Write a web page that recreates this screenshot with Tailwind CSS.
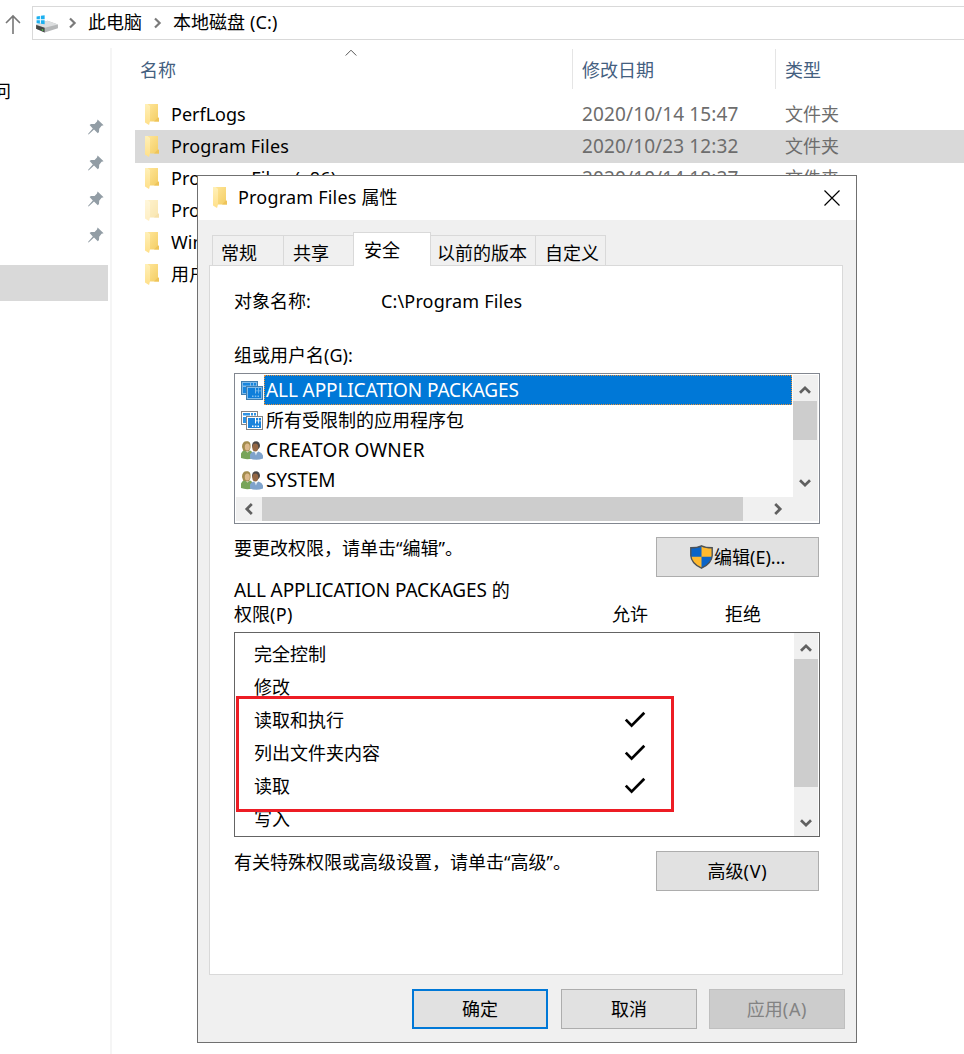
<!DOCTYPE html>
<html lang="zh-CN">
<head>
<meta charset="utf-8">
<title>本地磁盘 (C:)</title>
<script src="https://cdn.jsdelivr.net/npm/@tailwindcss/browser@4"></script>
</head>
<body class="bg-white">
<svg class="absolute w-0 h-0">
  <defs>
    <linearGradient id="gf" x1="0" x2="1" y1="0" y2="1"><stop offset="0" stop-color="#ffe69a"/><stop offset="1" stop-color="#f3cd63"/></linearGradient>
    <linearGradient id="gl" x1="0" x2="0" y1="0" y2="1"><stop offset="0" stop-color="#fff0b8"/><stop offset="1" stop-color="#ffe08a"/></linearGradient>
    <symbol id="folder" viewBox="0 0 15 21"><path d="M2 0H13V13.5L14 14V17.5H2Z" fill="url(#gf)"/><path d="M13 13.5L14 14V17.5H9Z" fill="#eec45a"/><path d="M0 0H2.5L5 2V17.5L4 21L0 18.5Z" fill="url(#gl)"/></symbol>
    <symbol id="pin" viewBox="0 0 16 16"><path d="M9.6 .6L15.6 6.2L13.6 6.8L11.2 9.8L11 13L9.8 14.2L6 10.6L.6 15.4L0 14.9L4.8 9.4L1.6 6L3 4.9L6.6 5L9 2.6Z" fill="#929da5"/></symbol>
    <symbol id="up" viewBox="0 0 12 9"><path d="M1 7.8L6 2.8L11 7.8" fill="none" stroke="#606060" stroke-width="2.7"/></symbol>
    <symbol id="down" viewBox="0 0 12 9"><path d="M1 1.2L6 6.2L11 1.2" fill="none" stroke="#606060" stroke-width="2.7"/></symbol>
    <symbol id="left" viewBox="0 0 9 12"><path d="M7.8 1L2.8 6L7.8 11" fill="none" stroke="#606060" stroke-width="2.7"/></symbol>
    <symbol id="right" viewBox="0 0 9 12"><path d="M1.2 1L6.2 6L1.2 11" fill="none" stroke="#606060" stroke-width="2.7"/></symbol>
    <symbol id="crumb" viewBox="0 0 8 12"><path d="M1 1.5L5.6 6L1 10.5" fill="none" stroke="#7a7a7a" stroke-width="2.2"/></symbol>
    <symbol id="check" viewBox="0 0 22 18"><path d="M1.8 8.6L7.6 14.6L20.3 1.8" fill="none" stroke="#000" stroke-width="2.7"/></symbol>
    <symbol id="pkg" viewBox="0 0 22 19">
      <rect x=".5" y=".5" width="16" height="13" fill="#fff" stroke="#858585"/><path d="M2 2H9V4.500H2ZM2 6H5V12H2ZM10 2H12V4.500H10ZM13 2H15V4.500H13Z" fill="#2f93e4"/>
      <rect x="5.5" y="5.500" width="16" height="13" fill="#fff" stroke="#858585"/><path d="M7 7H14V12.500H7ZM15 7H17.200V9.500H15ZM18 7H20V9.500H18ZM15 10.200H17.200V12.500H15ZM18 10.200H20V12.500H18ZM7 12.500H20V17H7Z" fill="#1c84dc"/><path d="M11 14.500h1.500v1.500H11zM13.800 14.500h1.500v1.500h-1.500zM16.500 14.500H18v1.500h-1.500z" fill="#fff"/>
    </symbol>
    <symbol id="users" viewBox="0 0 22 19">
      <path d="M1 6C1 2 3 0 6 .3C9 .3 10 3 9.500 7L8 10.500H2.500Z" fill="#a38c4e"/><ellipse cx="6.300" cy="6" rx="2.500" ry="3.500" fill="#dcb98c"/>
      <path d="M0 17V12.500Q1 9.700 4 9.500L6.500 11.500L9 9.500Q11.500 10 11.500 13V17.500Q5 19 0 17Z" fill="#78a45a"/>
      <ellipse cx="15" cy="4.500" rx="4" ry="4.300" fill="#4a4644"/><ellipse cx="14.300" cy="6.500" rx="3" ry="4" fill="#946743"/>
      <path d="M9 17.500V13.500Q10 11 13 10.500L15 12.500L17.500 10.500Q21 11.500 22 14.500V17.500Q15 20 9 17.500Z" fill="#7fa3cc"/><path d="M13.300 10.800L14.600 12.600L16.200 10.800L15 14.500Z" fill="#e6eef6"/>
    </symbol>
  </defs>
</svg>
<div class="relative w-[964px] h-[1054px] overflow-hidden bg-white text-black text-[18px] leading-6 whitespace-nowrap font-['Noto_Sans','Noto_Sans_CJK_SC',sans-serif]">

  <!-- address bar -->
  <header class="flex h-12 pt-[6px]">
    <div class="w-8 pl-[5px] pt-[8px]"><svg class="w-4 h-5" viewBox="0 0 16 20"><path d="M8 20V2M1 9L8 2L15 9" fill="none" stroke="#777" stroke-width="1.600"/></svg></div>
    <div class="flex h-[34px] flex-1 items-center border border-r-0 border-[#d9d9d9] pl-[3px]">
      <svg class="w-[23px] h-[19px] mt-[2px]" viewBox="0 0 24 20"><path d="M0 10L12 6L23 10V14L9 18.500L0 14.500Z" fill="#b5b7b8"/><path d="M0 10L12 6L23 10L9 13.500Z" fill="#dcdedf"/><path d="M0 10.500L9 13.500V18.500L0 14.500Z" fill="#444746"/><path d="M6 14.800l1.500.5v1.500L6 16.200z" fill="#57d04b"/><path d="M.5 1.500L4 1V4.500H.5ZM5 .8L9 .2V4.500H5ZM.5 5.500H4V9L.5 8.600ZM5 5.500H9V9.800L5 9.200Z" fill="#1cb0f0"/></svg>
      <svg class="w-2 h-3 ml-[10px]"><use href="#crumb"/></svg>
      <span class="ml-[11px] mb-[2px]">此电脑</span>
      <svg class="w-2 h-3 ml-[12px]"><use href="#crumb"/></svg>
      <span class="ml-[11px] mb-[2px]">本地磁盘<span class="tracking-[.2px]"> (C:)</span></span>
    </div>
  </header>

  <div class="flex">
    <!-- navigation pane -->
    <nav class="w-[112px] h-[1006px] border-r-2 border-[#f5f5f5] pt-[25px] overflow-hidden">
      <div class="h-9 -ml-[7px] flex items-center">问</div>
      <div class="h-9 flex items-center justify-end pr-[6px]"><svg class="w-4 h-4"><use href="#pin"/></svg></div>
      <div class="h-9 flex items-center justify-end pr-[6px]"><svg class="w-4 h-4"><use href="#pin"/></svg></div>
      <div class="h-9 flex items-center justify-end pr-[6px]"><svg class="w-4 h-4"><use href="#pin"/></svg></div>
      <div class="h-9 flex items-center justify-end pr-[6px]"><svg class="w-4 h-4"><use href="#pin"/></svg></div>
      <div class="mt-3 h-9 w-[108px] bg-[#d9d9d9]"></div>
    </nav>

    <!-- file list -->
    <main class="flex-1 pl-[23px]">
      <div class="flex h-[50px] pt-px text-[#44607f]">
        <div class="relative w-[438px] h-10 border-r border-[#e5e5e5] pl-[5px] pt-[9px]">名称
          <svg class="absolute left-[210px] top-0 w-3 h-[7px]" viewBox="0 0 12 7"><path d="M.7 6.500L6 1.200L11.300 6.500" fill="none" stroke="#555"/></svg>
        </div>
        <div class="w-[203px] h-10 border-r border-[#e5e5e5] pl-[9px] pt-[9px]">修改日期</div>
        <div class="pl-[9px] pt-[9px]">类型</div>
      </div>
      <div class="flex h-8 items-center"><svg class="w-[15px] h-[21px] ml-[10px]"><use href="#folder"/></svg><span class="w-[411px] ml-[11px]">PerfLogs</span><span class="w-[203px] text-[19px] tracking-[.12px] text-[#6d6d6d]">2020/10/14 15:47</span><span class="text-[#6d6d6d]">文件夹</span></div>
      <div class="flex h-[33px] -mb-px pb-px items-center bg-[#d9d9d9]"><svg class="w-[15px] h-[21px] ml-[10px]"><use href="#folder"/></svg><span class="w-[411px] ml-[11px] tracking-[.15px]">Program Files</span><span class="w-[203px] text-[19px] tracking-[.12px] text-[#6d6d6d]">2020/10/23 12:32</span><span class="text-[#6d6d6d]">文件夹</span></div>
      <div class="flex h-8 items-center"><svg class="w-[15px] h-[21px] ml-[10px]"><use href="#folder"/></svg><span class="w-[411px] ml-[11px] tracking-[.2px]">Program Files (x86)</span><span class="w-[203px] text-[19px] tracking-[.12px] text-[#6d6d6d]">2020/10/14 18:27</span><span class="text-[#6d6d6d]">文件夹</span></div>
      <div class="flex h-8 items-center"><svg class="w-[15px] h-[21px] ml-[10px] opacity-50"><use href="#folder"/></svg><span class="w-[411px] ml-[11px]">ProgramData</span></div>
      <div class="flex h-8 items-center"><svg class="w-[15px] h-[21px] ml-[10px]"><use href="#folder"/></svg><span class="w-[411px] ml-[11px]">Windows</span></div>
      <div class="flex h-8 items-center"><svg class="w-[15px] h-[21px] ml-[10px]"><use href="#folder"/></svg><span class="w-[411px] ml-[11px]">用户</span></div>
    </main>
  </div>

  <!-- properties window -->
  <section class="absolute left-[197px] top-[175px] w-[660px] h-[868px] border border-[#707070] bg-[#f0f0f0]">
    <div class="flex h-11 items-center bg-white pl-[15px] pr-[16px]">
      <svg class="w-[15px] h-[21px] -mt-px"><use href="#folder"/></svg>
      <span class="ml-[10px] mb-[2px]"><span class="tracking-[.2px]">Program Files </span>属性</span>
      <svg class="ml-auto w-4 h-4" viewBox="0 0 16 16"><path d="M.5 .5L15.500 15.500M15.500 .5L.5 15.500" stroke="#000" stroke-width="1.200"/></svg>
    </div>

    <div class="relative z-10 flex items-end h-[46px] pl-[14px]">
      <div class="w-[72px] h-[31px] border border-[#d9d9d9] pl-[8px] pt-[5px]">常规</div>
      <div class="w-[69px] h-[31px] border-y border-[#d9d9d9] pl-[9px] pt-[5px]">共享</div>
      <div class="w-[78px] h-[34px] border border-b-0 border-[#d9d9d9] bg-white pl-[10px] pt-[5px]">安全</div>
      <div class="w-[105px] h-[31px] border border-l-0 border-[#d9d9d9] pl-[6px] pt-[5px]">以前的版本</div>
      <div class="w-[70px] h-[31px] border border-l-0 border-[#d9d9d9] pl-[9px] pt-[5px]">自定义</div>
    </div>

    <div class="-mt-px ml-[11px] w-[634px] h-[710px] border border-[#d9d9d9] bg-white pl-6 pt-[23px]">
      <div class="flex"><span class="w-[147px]">对象名称:</span><span class="tracking-[.15px]">C:\Program Files</span></div>
      <div class="mt-[30px]">组或用户名(G):</div>

      <div class="mt-[6px] flex flex-wrap content-start w-[586px] h-[151px] border border-[#828790] bg-white p-px">
        <div class="w-[557px] h-[122px] pl-[5px]">
          <div class="flex h-[30px] items-center"><svg class="w-[22px] h-[19px]" viewBox="0 0 22 19"><use href="#pkg" width="22" height="19"/><path d="M0 0H17V5H22V19H5V14H0Z" fill="#0078d7" opacity=".5"/></svg><span class="ml-px h-[30px] w-[528px] border border-dotted border-[#e8923c] bg-[#0078d7] pl-px pt-[2px] text-[19px] tracking-[-.1px] text-white">ALL APPLICATION PACKAGES</span></div>
          <div class="flex h-[30px] items-center"><svg class="w-[22px] h-[19px]"><use href="#pkg"/></svg><span class="ml-[3px]">所有受限制的应用程序包</span></div>
          <div class="flex h-[30px] items-center"><svg class="w-[22px] h-[19px]"><use href="#users"/></svg><span class="ml-[3px] text-[19px] tracking-[.2px]">CREATOR OWNER</span></div>
          <div class="flex h-[30px] items-center"><svg class="w-[22px] h-[19px]"><use href="#users"/></svg><span class="ml-[3px] text-[19px] tracking-[-.1px]">SYSTEM</span></div>
        </div>
        <div class="flex flex-col items-start w-[25px] h-[122px] bg-[#f0f0f0]">
          <svg class="w-3 h-[9px] ml-[6px] mt-[10px] mb-[7px]"><use href="#up"/></svg>
          <div class="w-6 h-[39px] bg-[#cdcdcd]"></div>
          <svg class="w-3 h-[9px] ml-[6px] mt-auto mb-[9px]"><use href="#down"/></svg>
        </div>
        <div class="flex items-center w-[582px] h-6 bg-[#f0f0f0]">
          <svg class="w-[9px] h-3 ml-[8px] mr-[9px]"><use href="#left"/></svg>
          <div class="w-[481px] h-6 bg-[#cdcdcd]"></div>
          <svg class="w-[9px] h-3 ml-[31px]"><use href="#right"/></svg>
        </div>
      </div>

      <div class="mt-[13px] flex h-10">
        <span class="w-[422px] leading-[22px]">要更改权限，请单击“编辑”。</span>
        <div class="flex w-[163px] items-center border border-[#adadad] bg-[#e1e1e1] pl-[33px]">
          <svg class="w-[23px] h-6" viewBox="0 0 23 24"><path d="M11.500 .8Q7.500 2.800 .8 2.800V10.500Q1.200 18.500 11.500 23.200Q21.800 18.500 22.200 10.500V2.800Q15.500 2.800 11.500 .8Z" fill="#ffb92e"/><path d="M11.500 .8Q7.500 2.800 .8 2.800V11.800H11.500ZM11.500 11.800H22.200Q21 19 11.500 23.200Z" fill="#0a64c8"/><path d="M11.500 .8Q7.500 2.800 .8 2.800V10.500Q1.200 18.500 11.500 23.200Q21.800 18.500 22.200 10.500V2.800Q15.500 2.800 11.500 .8Z" fill="none" stroke="#4c5258" stroke-width="1.400"/></svg>
          <span class="ml-px">编辑(E)...</span>
        </div>
      </div>

      <div class="mt-px h-6 leading-6"><span class="text-[19px] tracking-[-.1px]">ALL APPLICATION PACKAGES </span>的</div>
      <div class="flex"><span class="w-[378px]">权限<span class="tracking-[.3px]">(P)</span></span><span class="w-[113px]">允许</span><span>拒绝</span></div>

      <div class="relative mt-[6px] flex w-[586px] h-[205px] border border-[#646464] bg-white">
        <div class="w-[559px] pl-[19px] pt-[4px] h-[203px] overflow-hidden">
          <div class="flex h-[33px] items-center">完全控制</div>
          <div class="flex h-[33px] items-center">修改</div>
          <div class="flex h-[33px] items-center"><span class="w-[370px]">读取和执行</span><svg class="w-[22px] h-[18px] mt-px"><use href="#check"/></svg></div>
          <div class="flex h-[33px] items-center"><span class="w-[370px]">列出文件夹内容</span><svg class="w-[22px] h-[18px] mt-px"><use href="#check"/></svg></div>
          <div class="flex h-[33px] items-center"><span class="w-[370px]">读取</span><svg class="w-[22px] h-[18px] mt-px"><use href="#check"/></svg></div>
          <div class="flex h-[33px] items-center pt-px">写入</div>
        </div>
        <div class="flex flex-col items-center w-6 h-[203px] bg-[#f0f0f0]">
          <svg class="w-3 h-[9px] mt-[10px] mb-[7px]"><use href="#up"/></svg>
          <div class="w-6 h-[128px] bg-[#cdcdcd]"></div>
          <svg class="w-3 h-[9px] mt-auto mb-[8px]"><use href="#down"/></svg>
        </div>
        <div class="absolute left-px top-[63px] w-[438px] h-[116px] border-3 border-[#ed1c24]"></div>
      </div>

      <div class="mt-[14px] flex h-10">
        <span class="w-[422px] leading-[23px]">有关特殊权限或高级设置，请单击“高级”。</span>
        <div class="flex w-[163px] items-center justify-center border border-[#adadad] bg-[#e1e1e1]">高级<span class="tracking-[.8px]">(V)</span></div>
      </div>
    </div>

    <div class="mt-[14px] flex pl-[214px]">
      <div class="flex w-[136px] h-10 items-center justify-center border-2 border-[#0078d7] bg-[#e1e1e1]">确定</div>
      <div class="ml-[13px] flex w-[136px] h-10 items-center justify-center border border-[#adadad] bg-[#e1e1e1]">取消</div>
      <div class="ml-3 flex w-[136px] h-10 items-center justify-center border border-[#bfbfbf] bg-[#cccccc] text-[#838383]">应用<span class="tracking-[.7px]">(A)</span></div>
    </div>
  </section>
</div>
</body>
</html>
